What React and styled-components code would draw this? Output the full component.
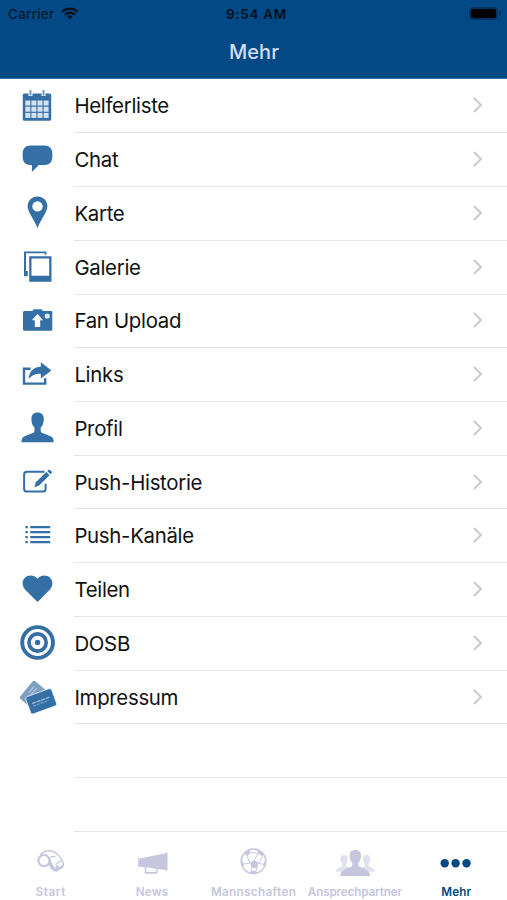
import React, { useState } from 'react';
import styled, { createGlobalStyle } from 'styled-components';

const BLUE = '#024985';
const ICON = '#346fa6';
const MUTED = '#c6c6de';

const CalendarIcon = () => (
  <>
    <rect x="7.8" y="9.6" width="28.4" height="27.2" rx="1.6" fill={ICON} />
    <path d="M15.5 6v6M28.5 6v6" stroke="#fff" strokeWidth="4" />
    <path d="M15.5 6v5.6M28.5 6v5.6" stroke="#6f9ac2" strokeWidth="2" />
    {[16.5, 22.7, 28.9].map((y) =>
      [10.3, 16.4, 22.5, 28.6].map((x) => (
        <rect key={`${x}-${y}`} x={x} y={y} width="5" height="5" fill="#d5e3f1" />
      ))
    )}
  </>
);

const ChatIcon = () => (
  <path
    d="M15.5 7.4h14c5 0 7.8 3 7.8 8v3.6c0 5-2.8 8-7.8 8h-5.6l-7 6.9v-6.9h-1.4c-5 0-7.8-3-7.8-8v-3.6c0-5 2.8-8 7.8-8z"
    fill={ICON}
  />
);

const PinIcon = () => (
  <path
    fillRule="evenodd"
    d="M22.5 4.500c-5.600 0-9.900 4.300-9.900 9.700 0 5.200 5.800 12.400 9.900 21.700 4.100-9.300 9.900-16.500 9.900-21.700 0-5.400-4.300-9.700-9.900-9.700zm0 4.700a5.200 5.200 0 1 1 0 10.400a5.200 5.200 0 1 1 0-10.400z"
    fill={ICON}
  />
);

const GalleryIcon = () => (
  <>
    <path d="M9 5.500h22.400v3.200h-1.700V7.300H11V25h1.800v5.300H9z" fill={ICON} />
    <path fillRule="evenodd" d="M14.200 10.200h22.300v25.500H14.200zM16.500 12.500v17.300h17.700V12.500z" fill={ICON} />
  </>
);

const UploadIcon = () => (
  <>
    <path
      d="M9.500 12h7.800l1.300-1.800h8l1.300 1.800h7.900c1 0 1.500.6 1.500 1.500v16.700c0 1-.6 1.500-1.500 1.500H9.500c-1 0-1.500-.6-1.500-1.500V13.500c0-.9.6-1.500 1.500-1.500z"
      fill={ICON}
    />
    <path d="M22.500 15.100l5.700 6.200h-3v6.800h-5.400v-6.800h-3z" fill="#fff" />
    <circle cx="32.200" cy="17.100" r="2.600" fill="#dfeaf5" />
  </>
);

const LinksIcon = () => (
  <>
    <path d="M15.600 15.700H9v14.900h21.200v-5.400" fill="none" stroke={ICON} strokeWidth="2.400" />
    <path d="M25.800 9.300l10.600 8.200-10.600 8v-4.600c-5.400-.3-8.500 1-12.200 5.400.5-7.600 4.400-12.200 12.200-12.600z" fill={ICON} />
  </>
);

const ProfileIcon = () => (
  <path
    d="M22.600 5.400c4.100 0 6.200 2.600 6.200 6.300 0 4-1 7-3.100 8.700v3.300c0 1.500 1 2.100 3 2.900l6.300 2.400c2.800 1.100 3.700 2.600 3.700 6.300H6.500c0-3.700.9-5.200 3.700-6.300l6.300-2.400c2-.8 3-1.400 3-2.900v-3.300c-2.100-1.700-3.100-4.700-3.100-8.700 0-3.700 2.100-6.300 6.200-6.300z"
    fill={ICON}
  />
);

const EditIcon = () => (
  <>
    <path
      d="M29.500 10.800H12c-1.800 0-2.900 1.100-2.900 2.900v14c0 1.800 1.100 2.900 2.900 2.900h15.700c1.800 0 2.900-1.100 2.900-2.900v-5"
      fill="none"
      stroke={ICON}
      strokeWidth="2"
    />
    <path d="M19.300 26.200l1.600-4.900L31.300 11l3.200 3.200-10.400 10.300z" fill={ICON} />
    <path d="M32.300 10l1-1c.5-.5 1.200-.5 1.700 0l1.500 1.500c.5.500.5 1.200 0 1.700l-1 1z" fill={ICON} />
  </>
);

const ListIcon = () => (
  <>
    {[13.2, 18.2, 23.2, 28.2].map((y) => (
      <path key={y} d={`M10.400 ${y}h2.400M15.200 ${y}h20`} stroke={ICON} strokeWidth="2.300" />
    ))}
  </>
);

const HeartIcon = () => (
  <path
    d="M22.500 10.800c2-2.200 4.200-3.200 6.900-3.200 4.500 0 8 3.300 8 8 0 3.300-1.800 5.500-4.400 8L22.500 34.100 12 23.600c-2.600-2.500-4.400-4.700-4.400-8 0-4.700 3.500-8 8-8 2.700 0 4.900 1 6.900 3.200z"
    fill={ICON}
  />
);

const TargetIcon = () => (
  <>
    <circle cx="22.600" cy="20.500" r="15.400" fill="none" stroke={ICON} strokeWidth="3.900" />
    <circle cx="22.600" cy="20.500" r="8.600" fill="none" stroke={ICON} strokeWidth="3.700" />
    <circle cx="22.600" cy="20.500" r="2.700" fill={ICON} />
  </>
);

const CardsIcon = () => (
  <>
    <rect x="6" y="10.500" width="23" height="17.500" rx="2" fill="#7da0c2" transform="rotate(-50 17.500 19.300) translate(1 0)" />
    <path d="M14 16.500l5-6M16 18.500l6-6.500" stroke="#a9c2da" strokeWidth="1.300" />
    <g transform="rotate(-20 26.200 25.300)">
      <rect x="12.400" y="16.100" width="27.600" height="18.400" rx="2.400" fill={ICON} stroke="#fff" strokeWidth=".7" />
      <path d="M17 24.300h19" stroke="#9dbbd7" strokeWidth="1.400" strokeDasharray="4 .8" />
      <path d="M17 27.100h15" stroke="#7fa6ca" strokeWidth="1.200" strokeDasharray="3 1" />
    </g>
  </>
);

const WhistleIcon = () => (
  <g fill="none" stroke={MUTED} strokeLinejoin="round">
    <circle cx="15" cy="13.600" r="5.600" strokeWidth="2.100" />
    <path d="M10.800 8.600C13.500 4.800 18.500 3 22.600 4c4.900 1.200 9.500 7 12 12.600l-.6 3-7 4.700" strokeWidth="1.400" />
    <path d="M20.300 12.500c1.200 4.300 3.300 8.300 6.700 11.400" strokeWidth="2.500" />
    <path d="M19.800 17c1.500 2.800 3.800 5.300 6.600 7" strokeWidth="1.600" />
    <path d="M21.500 10.600c1.500-1.300 3.300-1.500 4.800-.3M26.500 17.500l5.500-4" strokeWidth="1.300" />
    <path d="M26.700 19.500l1.800-1.500 1.300 2.700 4.500-2.900-.4 2-6.300 4.300z" fill={MUTED} strokeWidth=".6" />
  </g>
);

const MegaphoneIcon = () => (
  <>
    <path d="M8.200 10.300l1.400 1.100 26-5.200.6-.9h1.300v18.500h-1.300l-.6-.9-26-3.500-1.400.9z" fill={MUTED} />
    <path d="M15.500 20v5.900h10.800l1-5.400" fill="none" stroke={MUTED} strokeWidth="1.600" />
  </>
);

const BallIcon = () => (
  <>
    <circle cx="21.500" cy="14.300" r="12.300" fill="none" stroke={MUTED} strokeWidth="1.500" />
    <path d="M22.300 12.800l4.300 3.200-1.600 5h-5.300L18 16z" fill={MUTED} />
    <path
      d="M12.300 6.400l5.200-3.500 1.200 2.600-3.500 3.800zM25.500 2.800l5.900 3.700-.8 3.200-4.300-3.300zM9.600 13l2.700 4-1.200 3.300-1.700-4zM33.500 12.800l-2.500 4.500.9 3 1.500-3zM17.500 25.900l1.500-2.200h5l1.500 2.200z"
      fill={MUTED}
    />
    <path
      d="M18.700 5.500l7.600 1M15.200 9.300L18 16l-5.700 1M26.300 6.500l-4 6.300M30.600 9.700l-4 6.300 4.400 1.300M25 21l-1 2.700M19.700 21l-.7 2.700"
      fill="none"
      stroke={MUTED}
      strokeWidth="1"
    />
  </>
);

const PeopleIcon = () => (
  <>
    {[11, 33.7].map((x) => (
      <path
        key={x}
        transform={`translate(${x} 8)`}
        d="M0 0c2.400 0 3.600 1.500 3.600 3.800S2.900 8 1.900 8.900v2c1.500 1.300 6.200 1.300 6.200 5.800H-8.100c0-4.500 4.700-4.500 6.200-5.800v-2C-2.900 8-3.600 6.100-3.600 3.800S-2.400 0 0 0z"
        fill="#e2e2ee"
      />
    ))}
    <path
      d="M22.300 3c3.800 0 5.700 2.300 5.700 5.500 0 3.500-1 6-2.800 7.500v2c0 3.400 12 2.600 12 11H7.400c0-8.400 12-7.600 12-11v-2c-1.800-1.500-2.800-4-2.800-7.500 0-3.200 1.900-5.500 5.700-5.500z"
      fill={MUTED}
    />
  </>
);

const DotsIcon = () => (
  <>
    {[10.7, 21.6, 32.5].map((x) => (
      <circle key={x} cx={x} cy="16.300" r="4.200" fill={BLUE} />
    ))}
  </>
);

const items = [
  { label: 'Helferliste', icon: CalendarIcon },
  { label: 'Chat', icon: ChatIcon },
  { label: 'Karte', icon: PinIcon },
  { label: 'Galerie', icon: GalleryIcon },
  { label: 'Fan Upload', icon: UploadIcon },
  { label: 'Links', icon: LinksIcon },
  { label: 'Profil', icon: ProfileIcon },
  { label: 'Push-Historie', icon: EditIcon },
  { label: 'Push-Kanäle', icon: ListIcon },
  { label: 'Teilen', icon: HeartIcon },
  { label: 'DOSB', icon: TargetIcon },
  { label: 'Impressum', icon: CardsIcon },
];

const tabs = [
  { label: 'Start', icon: WhistleIcon, spacing: '0.6px' },
  { label: 'News', icon: MegaphoneIcon, spacing: '0.2px' },
  { label: 'Mannschaften', icon: BallIcon, spacing: '0.35px' },
  { label: 'Ansprechpartner', icon: PeopleIcon, spacing: '-0.15px' },
  { label: 'Mehr', icon: DotsIcon, spacing: '0.2px' },
];

export default function App() {
  const [active, setActive] = useState('Mehr');

  return (
    <Screen>
      <GlobalStyle />
      <Header>
        <StatusBar>
          <Carrier>
            Carrier
            <svg width="18" height="13" viewBox="0 0 18 13">
              <path d="M1.300 4.800a11 11 0 0 1 15.400 0M4 7.700a7.200 7.200 0 0 1 10 0" fill="none" stroke="#00101f" strokeWidth="2.300" />
              <path d="M9 12.300L6.200 9.600a4 4 0 0 1 5.600 0z" fill="#00101f" />
            </svg>
          </Carrier>
          <Time>9:54 AM</Time>
          <Battery>
            <BatteryBody />
            <BatteryCap />
          </Battery>
        </StatusBar>
        <Title>Mehr</Title>
      </Header>

      <List>
        {items.map(({ label, icon: Icon }) => (
          <Row key={label}>
            <RowIcon viewBox="0 0 44 44">
              <Icon />
            </RowIcon>
            <RowBody>
              <RowLabel>{label}</RowLabel>
              <Chevron viewBox="0 0 12 18">
                <path d="M2 2l7 7L2 16" fill="none" stroke="#c9c9cc" strokeWidth="1.900" />
              </Chevron>
            </RowBody>
          </Row>
        ))}
        {/* leere Zeilen */}
        <Row><RowBody /></Row>
        <Row><RowBody /></Row>
      </List>

      <TabBar>
        {tabs.map(({ label, icon: Icon, spacing }) => (
          <Tab key={label} onClick={() => setActive(label)}>
            <TabIcon viewBox="0 0 44 32">
              <Icon />
            </TabIcon>
            <TabLabel $active={active === label} $spacing={spacing}>{label}</TabLabel>
          </Tab>
        ))}
      </TabBar>
    </Screen>
  );
}

const GlobalStyle = createGlobalStyle`
  * {
    box-sizing: border-box;
  }
  body {
    margin: 0;
    background: #fff;
    font-family: Inter, 'Liberation Sans', sans-serif;
  }
`;

const Screen = styled.div`
  width: 507px;
  height: 900px;
  display: flex;
  flex-direction: column;
  background: #fff;
  overflow: hidden;
`;

const Header = styled.header`
  height: 79px;
  flex-shrink: 0;
  background: ${BLUE};
  border-bottom: 1px solid #2f6ea5;
`;

const StatusBar = styled.div`
  height: 27px;
  padding: 0 8px;
  display: grid;
  grid-template-columns: 1fr auto 1fr;
  align-items: center;
  color: #00101f;
`;

const Carrier = styled.div`
  display: flex;
  align-items: center;
  gap: 7px;
  font-size: 13.5px;
  letter-spacing: 0.3px;

  svg {
    margin-top: -1px;
  }
`;

const Time = styled.div`
  padding-left: 6px;
  font-size: 13.5px;
  font-weight: 600;
  letter-spacing: 0.7px;
`;

const Battery = styled.div`
  display: flex;
  justify-content: flex-end;
  align-items: center;
  gap: 1px;
`;

const BatteryBody = styled.div`
  width: 29px;
  height: 13px;
  border: 2px solid #04335f;
  border-radius: 4px;
  background: #000;
`;

const BatteryCap = styled.div`
  width: 2px;
  height: 5px;
  margin-right: -2px;
  border-radius: 0 2px 2px 0;
  background: #04335f;
`;

const Title = styled.h1`
  margin: 0;
  padding-left: 1px;
  font-size: 20px;
  font-weight: 500;
  line-height: 51px;
  text-align: center;
  color: #d3dcf2;
`;

const List = styled.main`
  padding-top: 0.6px;
  flex-shrink: 0;
`;

const Row = styled.div`
  height: 53.74px;
  display: flex;
  justify-content: flex-end;
  align-items: center;
`;

const RowIcon = styled.svg`
  width: 44px;
  height: 44px;
  margin-right: 15px;
  flex-shrink: 0;
`;

const RowBody = styled.div`
  width: 433px;
  height: 100%;
  padding-right: 23px;
  display: flex;
  flex-shrink: 0;
  justify-content: space-between;
  align-items: center;
  border-bottom: 1px solid #e6e6e8;
`;

const RowLabel = styled.span`
  padding-left: 0.4px;
  font-size: 20.4px;
  letter-spacing: -0.3px;
  color: #111;
`;

const Chevron = styled.svg`
  width: 12px;
  height: 18px;
  margin-top: -1px;
`;

const TabBar = styled.nav`
  height: 67px;
  padding-top: 15px;
  display: flex;
`;

const Tab = styled.button`
  flex: 1 1 0;
  min-width: 0;
  padding: 0;
  display: flex;
  flex-direction: column;
  align-items: center;
  border: 0;
  background: none;
  font-family: inherit;
`;

const TabIcon = styled.svg`
  width: 44px;
  height: 32px;
  flex-shrink: 0;
`;

const TabLabel = styled.span`
  margin-top: 5px;
  font-size: 11.7px;
  font-weight: 600;
  line-height: 16px;
  letter-spacing: ${({ $spacing }) => $spacing};
  white-space: nowrap;
  color: ${({ $active }) => ($active ? BLUE : MUTED)};
`;
